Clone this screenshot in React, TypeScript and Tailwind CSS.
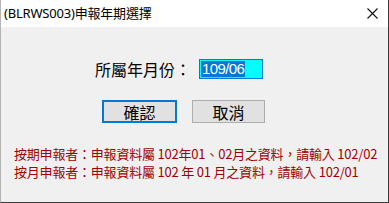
import React from "react";

export default function App() {
  const cjk = { fontFamily: '"Noto Sans CJK TC", "Noto Sans", sans-serif' };
  return (
    <div className="w-[389px] h-[203px] flex flex-col bg-[#f0f0f0] border-l border-l-[#b4b4b4] border-r border-r-[#3a3a3a] border-b border-b-[#3a3a3a] overflow-hidden" style={cjk}>
      <div className="h-[27px] bg-white flex items-center justify-between pl-[3px] pr-[10px] shrink-0">
        <span className="text-[13px] text-black leading-none tracking-[-0.2px]" style={{ fontFamily: '"Noto Sans", "Noto Sans CJK TC", sans-serif' }}>(BLRWS003)申報年期選擇</span>
        <svg width="11" height="11" viewBox="0 0 11 11" className="shrink-0">
          <path d="M0.5 0.5 L10.5 10.5 M10.5 0.5 L0.5 10.5" stroke="#111" strokeWidth="1.1" fill="none" />
        </svg>
      </div>
      <div className="flex-1 flex flex-col">
        <div className="flex items-center pl-[94px] mt-[32px] h-[20px]">
          <span className="text-[16px] leading-none text-black w-[104px]">所屬年月份：</span>
          <div className="w-[64px] h-[20px] border border-[#0078d7] bg-[#00ffff] flex items-center pl-[1px]">
            <span className="bg-[#0078d7] text-white text-[15px] leading-[16px] h-[16px] px-[1px] tracking-[-0.6px]" style={{ fontFamily: '"Liberation Sans", Arial, sans-serif' }}>109/06</span>
          </div>
        </div>
        <div className="flex pl-[101px] mt-[21px] gap-[15px]">
          <button className="w-[75px] h-[23px] border-2 border-[#0078d7] bg-[#e1e1e1] text-[16px] leading-none text-black flex items-center justify-center">確認</button>
          <button className="w-[73px] h-[23px] border border-[#adadad] bg-[#e1e1e1] text-[16px] leading-none text-black flex items-center justify-center">取消</button>
        </div>
        <div className="pl-[13px] mt-[22px] text-[#a00000] text-[13px] leading-[18px] tracking-[-0.2px]">
          <div>按期申報者：申報資料屬 102年01、02月之資料，請輸入 102/02</div>
          <div>按月申報者：申報資料屬 102 年 01 月之資料，請輸入 102/01</div>
        </div>
      </div>
    </div>
  );
}
